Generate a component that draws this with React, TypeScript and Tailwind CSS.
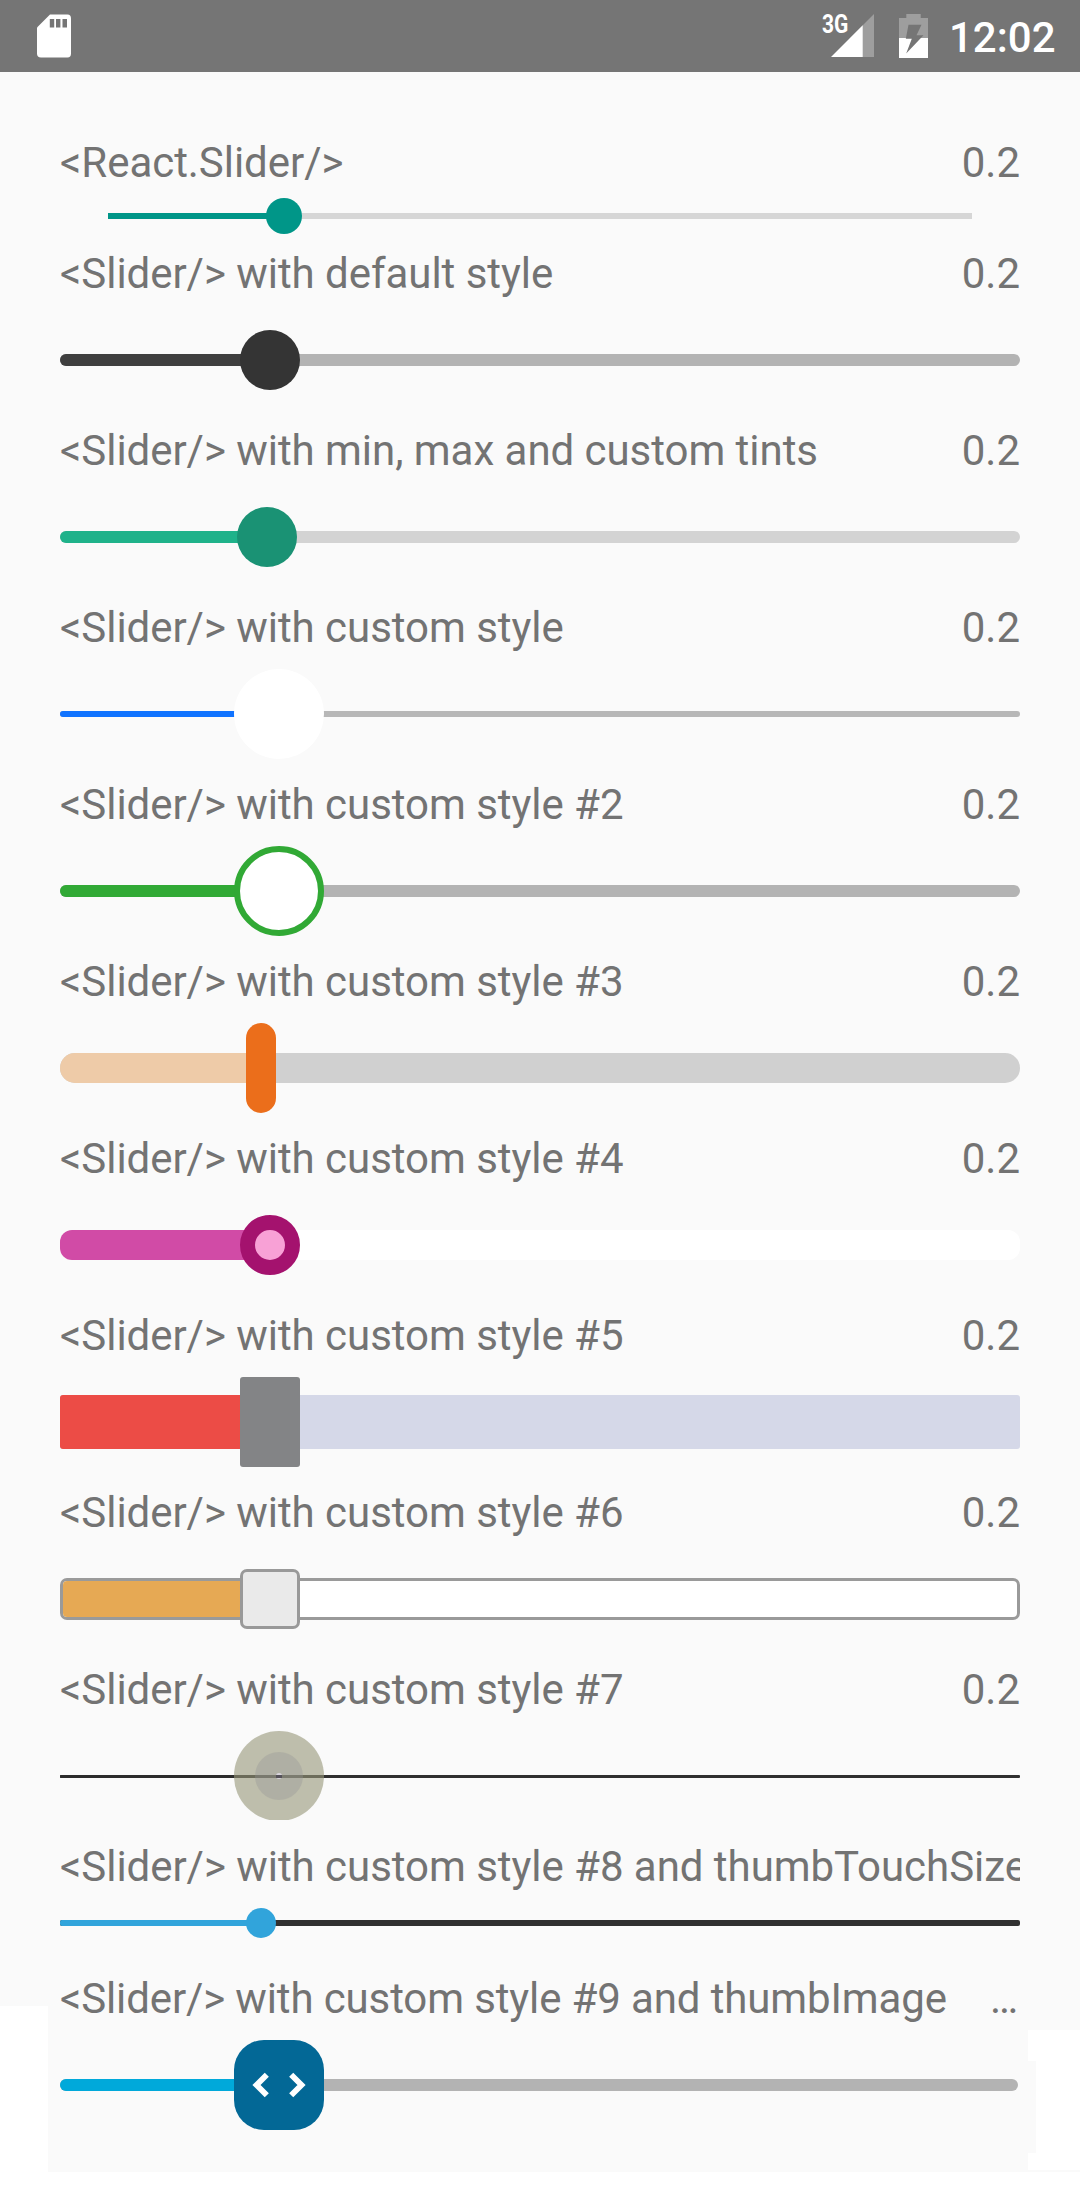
import React from 'react';

type RowProps = {
  label: string;
  value?: string;
  area?: string;
  text?: string;
  track: string;
  fill: string;
  fillWidth: string;
  thumb: string;
  children?: React.ReactNode;
};

function Row({
  label,
  value = '0.2',
  area = 'h-[120px]',
  text = 'tracking-[-0.04px]',
  track,
  fill,
  fillWidth,
  thumb,
  children,
}: RowProps) {
  return (
    <section>
      <div className="flex h-[57px] justify-between overflow-hidden whitespace-nowrap pt-1 leading-[53px]">
        <span className={`shrink-0 ${text}`}>{label}</span>
        <span className={value === '…' ? 'pr-[2px]' : ''}>{value}</span>
      </div>
      <div className={`relative flex items-center ${area}`}>
        <div className={`flex w-full overflow-hidden ${track}`}>
          <div className={`h-full ${fill} ${fillWidth}`} />
        </div>
        <div className={`absolute top-1/2 -translate-y-1/2 ${thumb}`}>{children}</div>
      </div>
    </section>
  );
}

function StatusBar() {
  return (
    <header className="flex h-[72px] items-start bg-[#757575] text-white">
      <svg className="ml-[37px] mt-[14px] h-[44px] w-[34px]" viewBox="0 0 34 44">
        <path fill="#fff" d="M13 .6H30.500Q34 .6 34 4.500V39.500Q34 43.400 30.500 43.400H4Q0 43.400 0 39.500V13.400Z" />
        <path fill="#757575" d="M12.800 5H17.200V13.500H12.800ZM19 5H23.400V13.500H19ZM25.500 5H30V13.500H25.500Z" />
      </svg>
      <div className="relative ml-auto mt-[14px] h-[43px] w-[53px]">
        <span className="absolute left-[1px] top-[-4px] origin-left scale-x-[0.84] text-[25px] font-bold leading-[29px]">3G</span>
        <svg className="absolute right-0 top-0 h-[43px] w-[43px]" viewBox="0 0 43 43">
          <path fill="#9e9e9e" d="M43 0V43H31V12Z" />
          <path fill="#fff" d="M31.700 11.300V43H0Z" />
        </svg>
      </div>
      <svg className="ml-[25px] mt-[14px] h-[44px] w-[29px]" viewBox="0 0 29 44">
        <path fill="#9e9e9e" d="M7.300 0H21.700V4H29V24H0V4H7.300Z" />
        <path fill="#fff" d="M0 24H29V44H0Z" />
        <path fill="#757575" d="M9.500 10.800H22.500L17.500 21.300H24.500L7.200 39.500L12.800 24.700H6.800Z" />
      </svg>
      <span className="ml-[21px] mt-[11px] w-[131px] text-[42px] font-medium leading-[53px]">12:02</span>
    </header>
  );
}

export default function App() {
  return (
    <div className="relative h-[2186px] w-[1080px] overflow-hidden bg-white font-['Roboto',sans-serif]">
      <div className="h-[2172px] bg-[#fafafa]">
        <StatusBar />
        <main className="px-[60px] pt-[60px] text-[42px] text-[#737373]">
          <Row label="<React.Slider/>" area="h-[54px] px-[48px]" track="h-[6px] bg-[#d6d6d6]" fill="bg-[#009688]" fillWidth="w-[176px]" thumb="left-[206px] size-[36px] rounded-full bg-[#009688]" />
          <Row label="<Slider/> with default style" track="h-[12px] rounded-full bg-[#b3b3b3]" fill="bg-[#3f3f3f]" fillWidth="w-[210px]" thumb="left-[180px] size-[60px] rounded-full bg-[#343434]" />
          <Row label="<Slider/> with min, max and custom tints" track="h-[12px] rounded-full bg-[#d3d3d3]" fill="bg-[#1fb28a]" fillWidth="w-[207px]" thumb="left-[177px] size-[60px] rounded-full bg-[#1a9274]" />
          <Row label="<Slider/> with custom style" track="h-[6px] rounded-[3px] bg-[#b7b7b7]" fill="bg-[#1073ff]" fillWidth="w-[219px]" thumb="left-[174px] size-[90px] rounded-full bg-white" />
          <Row label="<Slider/> with custom style #2" track="h-[12px] rounded-full bg-[#b3b3b3]" fill="bg-[#31a935]" fillWidth="w-[219px]" thumb="left-[174px] size-[90px] rounded-full border-[6px] border-[#31a935] bg-white" />
          <Row label="<Slider/> with custom style #3" track="h-[30px] rounded-full bg-[#d0d0d0]" fill="bg-[#eecba8]" fillWidth="w-[201px]" thumb="left-[186px] h-[90px] w-[30px] rounded-full bg-[#eb6e1b]" />
          <Row label="<Slider/> with custom style #4" track="h-[30px] rounded-[12px] bg-white" fill="bg-[#d14ba6]" fillWidth="w-[210px]" thumb="left-[180px] size-[60px] rounded-full border-[15px] border-[#a4126e] bg-[#f8a1d6]" />
          <Row label="<Slider/> with custom style #5" track="h-[54px] rounded-[3px] bg-[#d5d8e8]" fill="bg-[#ec4c46]" fillWidth="w-[210px]" thumb="left-[180px] h-[90px] w-[60px] rounded-[3px] bg-[#838486]" />
          <Row label="<Slider/> with custom style #6" track="h-[42px] rounded-[7px] border-[3px] border-[#9a9a9a] bg-white" fill="bg-[#e6a954]" fillWidth="w-[210px]" thumb="left-[180px] size-[60px] rounded-[7px] border-[3px] border-[#999999] bg-[#eaeaea]" />
          <Row label="<Slider/> with custom style #7" track="mt-px h-[3px] rounded-[1px] bg-[#303030]" fill="bg-[#2b2b2b]" fillWidth="w-[219px]" thumb="left-[174px] h-[90px] w-[90px]">
            <div className="h-[89px] overflow-hidden">
              <div className="flex size-[90px] items-center justify-center rounded-full bg-[#969678]/60">
                <div className="flex size-[48px] items-center justify-center rounded-full bg-[#969696]/35">
                  <div className="size-[6px] rounded-full bg-[#d8d4dc] pt-[2px]">
                    <div className="h-[3px] bg-[#55525a]" />
                  </div>
                </div>
              </div>
            </div>
          </Row>
          <Row label="<Slider/> with custom style #8 and thumbTouchSize" value="" area="mb-[15px] h-[60px]" track="h-[6px] rounded-[2px] bg-[#303030]" fill="bg-[#31a4db]" fillWidth="w-[201px]" thumb="left-[186px] size-[30px] rounded-full bg-[#31a4db]" />
          <Row label="<Slider/> with custom style #9 and thumbImage" value="…" text="tracking-[-0.13px]" area="h-[120px] pr-[2px]" track="h-[12px] rounded-full bg-[#b3b3b3]" fill="bg-[#00a9da]" fillWidth="w-[219px]" thumb="left-[174px] size-[90px] rounded-[30px] bg-[#036896]">
            <svg className="size-[90px]" viewBox="0 0 90 90" fill="none" stroke="#fff" strokeWidth="5.800">
              <path d="M32.800 34.700L22.500 45L32.800 55.300M57.200 34.700L67.500 45L57.200 55.300" />
            </svg>
          </Row>
        </main>
      </div>
      <div className="absolute bottom-0 left-0 h-[180px] w-[48px] bg-white" />
      <div className="absolute right-0 top-[2030px] flex h-[140px] w-[52px] flex-col items-end">
        <div className="h-[31px] w-[52px] bg-white" />
        <div className="h-[92px] w-[44px] bg-white" />
        <div className="h-[17px] w-[52px] bg-white" />
      </div>
    </div>
  );
}
